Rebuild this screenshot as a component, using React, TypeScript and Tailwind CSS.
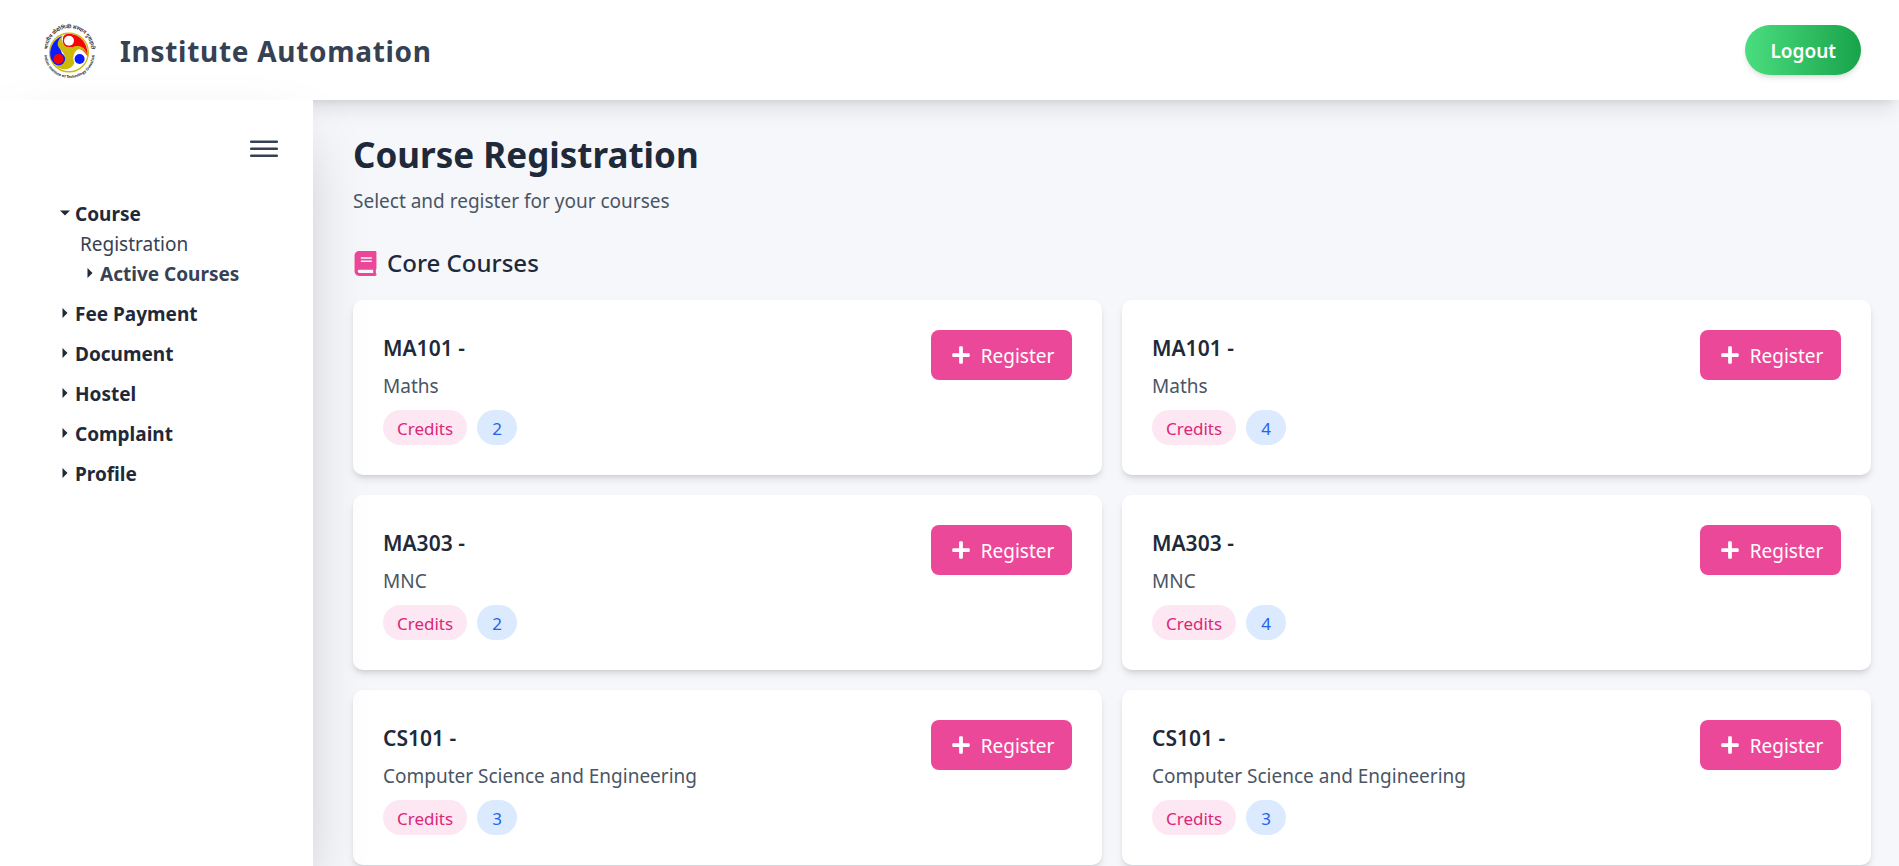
import React from "react";
import { FaPlus } from "react-icons/fa";

const courses = [
  { code: "MA101", name: "Maths", credits: 2 },
  { code: "MA101", name: "Maths", credits: 4 },
  { code: "MA303", name: "MNC", credits: 2 },
  { code: "MA303", name: "MNC", credits: 4 },
  { code: "CS101", name: "Computer Science and Engineering", credits: 3 },
  { code: "CS101", name: "Computer Science and Engineering", credits: 3 },
];

const sections = ["Fee Payment", "Document", "Hostel", "Complaint", "Profile"];

function Logo() {
  return (
    <svg viewBox="-1 -1 60 60" className="size-[60px] overflow-visible" role="img" aria-label="Institute emblem">
      <defs>
        <path id="ringTop" d="M8.8 29 A21.700 21.700 0 0 1 52.200 29" />
        <path id="ringBottom" d="M5.300 34 A25.300 25.300 0 0 0 55.700 34" />
      </defs>
      <text fontSize="5" fill="#222" fontWeight="600" fontFamily="'Noto Sans Devanagari','Noto Sans',sans-serif">
        <textPath href="#ringTop" startOffset="50%" textAnchor="middle">भारतीय प्रौद्योगिकी संस्थान गुवाहाटी</textPath>
      </text>
      <text fontSize="3.900" fill="#222" fontWeight="600" fontFamily="'Liberation Sans',sans-serif">
        <textPath href="#ringBottom" startOffset="50%" textAnchor="middle">Indian Institute of Technology Guwahati</textPath>
      </text>
      <circle cx="30" cy="31.500" r="19.300" fill="#fff" stroke="#cdb90a" strokeWidth="1.400" />
      <path d="M23.500 14.500 C14 18 9 29 12 38 C15 44 22 45 26 40 C24 33 17 24 23.500 14.500Z" fill="#0b1cff" />
      <path d="M27 13.300 C38 11 49.500 20 48.500 35 C43 27 38 26 33 27 C24 24 21 16 27 13.300Z" fill="#f70505" />
      <path d="M23.500 14.500 C13.500 24 22 28 24 31.500 C27 36 26 41 22 43.500 C18 45.500 15 44 14 42.500 C22 51.500 34 49 35.500 41 C33 35 36 27 42 28.500 C45 29 47.500 32 48.500 35 C46.500 24 38 24 34 26 C25 27 21 20 23.500 14.500Z" fill="#cdb90a" />
      <circle cx="30" cy="19.800" r="6.300" fill="#f70505" />
      <circle cx="30" cy="19.800" r="5" fill="#fff" />
      <circle cx="19.600" cy="38" r="6.500" fill="#0b1cff" />
      <circle cx="19.600" cy="38" r="5.100" fill="#f70505" />
      <circle cx="40.600" cy="38" r="6.200" fill="#fff" />
      <circle cx="40.600" cy="38" r="5" fill="#0b1cff" />
    </svg>
  );
}

function Caret({ open = false }: { open?: boolean }) {
  return (
    <svg viewBox="0 0 10 10" className="mb-[3px] size-[10px] shrink-0 fill-gray-800" aria-hidden="true">
      <path d={open ? "M0 2.500H10L5 7.500Z" : "M2.500 0V10L7.500 5Z"} />
    </svg>
  );
}

function CourseCard({ code, name, credits }: (typeof courses)[number]) {
  return (
    <article className="flex items-start justify-between rounded-[10px] bg-white p-[30px] shadow-[0_5px_8px_-1px_rgba(0,0,0,0.1),0_3px_5px_-2px_rgba(0,0,0,0.1)]">
      <div>
        <h3 className="text-[21px] leading-[36px] font-semibold text-gray-800">{code} -</h3>
        <p className="mt-[5px] text-[19px] leading-[30px] text-gray-600">{name}</p>
        <div className="mt-[9px] flex gap-[10px] text-[17px] leading-[25px]">
          <span className="rounded-full bg-[#fce7f3] px-[14px] pt-[6px] pb-[4px] text-[#db2777]">Credits</span>
          <span className="rounded-full bg-[#dbeafe] px-[15px] pt-[6px] pb-[4px] text-[#2563eb]">{credits}</span>
        </div>
      </div>
      <button type="button" className="flex h-[50px] w-[141px] items-center justify-center gap-[10px] rounded-[8px] bg-[#ec4899] pl-[2px] text-[19px] text-white">
        <FaPlus className="size-5" />
        <span className="pt-[2px]">Register</span>
      </button>
    </article>
  );
}

export default function App() {
  return (
    <div className="flex h-screen flex-col overflow-hidden bg-[#f5f7fb] font-['Noto_Sans','Open_Sans',sans-serif]">
      <header className="relative z-10 flex h-[100px] shrink-0 items-center justify-between bg-white px-[38px] shadow-[0_13px_19px_-4px_rgba(0,0,0,0.1),0_5px_8px_-5px_rgba(0,0,0,0.1)]">
        <div className="flex items-center gap-[22px]">
          <Logo />
          <span className="pt-[2px] text-[28px] font-bold tracking-wide text-gray-700">Institute Automation</span>
        </div>
        <button type="button" className="h-[50px] rounded-full bg-linear-to-r from-[#4ade80] to-[#16a34a] px-[25px] pt-[2px] text-[19px] font-semibold text-white shadow-md">
          Logout
        </button>
      </header>
      <div className="flex min-h-0 flex-1">
        <aside className="relative z-20 w-[313px] shrink-0 bg-white shadow-[0_31px_62px_-15px_rgba(0,0,0,0.25)]">
          <div className="flex justify-end px-[35px] pt-[34px]">
            <button type="button" aria-label="Toggle menu" className="text-gray-700">
              <svg viewBox="0 0 28 30" className="h-[30px] w-7" fill="none" stroke="currentColor" strokeWidth="2.500" strokeLinecap="round">
                <path d="M1.200 7.800H26.800M1.200 14.800H26.800M1.200 21.800H26.800" />
              </svg>
            </button>
          </div>
          <nav className="mt-[35px] pl-[60px] text-[19px] leading-[30px]">
            <button type="button" className="flex items-center gap-[5px] font-bold text-gray-800">
              <Caret open />
              Course
            </button>
            <div className="pl-5">
              <a href="#registration" className="block text-gray-700">Registration</a>
              <button type="button" className="flex items-center gap-[5px] pl-[5px] font-bold text-gray-700">
                <Caret />
                Active Courses
              </button>
            </div>
            {sections.map((s) => (
              <button key={s} type="button" className="mt-[10px] flex items-center gap-[5px] font-bold text-gray-800">
                <Caret />
                {s}
              </button>
            ))}
          </nav>
        </aside>
        <main className="min-w-0 flex-1 overflow-hidden pt-[30px] pr-7 pl-10">
          <h1 className="text-[35px] leading-[50px] font-bold text-gray-800">Course Registration</h1>
          <p className="mt-[6px] text-[19px] leading-[30px] text-gray-600">Select and register for your courses</p>
          <h2 className="mt-[29px] flex items-center gap-[9px] text-[24px] leading-[36px] font-medium text-gray-800">
            <svg viewBox="0 0 448 512" className="size-[25px] fill-[#ec4899]" aria-hidden="true">
              <path d="M448 360V24c0-13.300-10.700-24-24-24H96C43 0 0 43 0 96v320c0 53 43 96 96 96h328c13.300 0 24-10.700 24-24v-16c0-7.500-3.500-14.300-8.900-18.700-4.200-15.400-4.200-59.300 0-74.700 5.400-4.300 8.900-11.100 8.900-18.600zM128 134c0-3.300 2.700-6 6-6h212c3.300 0 6 2.700 6 6v20c0 3.300-2.700 6-6 6H134c-3.300 0-6-2.700-6-6v-20zm0 64c0-3.300 2.700-6 6-6h212c3.300 0 6 2.700 6 6v20c0 3.300-2.700 6-6 6H134c-3.300 0-6-2.700-6-6v-20zm253.400 250H96c-17.700 0-32-14.300-32-32 0-17.600 14.400-32 32-32h285.400c-1.900 17.100-1.900 46.900 0 64z" />
            </svg>
            Core Courses
          </h2>
          <div className="mt-[19px] grid grid-cols-2 gap-5">
            {courses.map((c, i) => (
              <CourseCard key={i} {...c} />
            ))}
          </div>
        </main>
      </div>
    </div>
  );
}
